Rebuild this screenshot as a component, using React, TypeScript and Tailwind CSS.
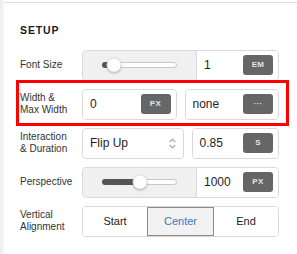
import React from "react";

const FONT = { fontFamily: '"Liberation Sans", Arial, sans-serif' };

function Badge({ label }: { label: string }) {
  return (
    <span className="flex h-[20px] w-[30px] shrink-0 items-center justify-center rounded-[3px] bg-[#666666] text-[8px] font-bold tracking-[0.3px] text-[#e4e4e4]">
      {label}
    </span>
  );
}

function Slider({ pos }: { pos: number }) {
  return (
    <div className="flex h-full w-[114px] shrink-0 items-center border-r border-[#d9d9d9] bg-[#f0f0f0] px-[19px]">
      <div className="relative h-[6px] w-full rounded-full border border-[#c8c8c8] bg-white">
        <div
          className="absolute -top-px -left-px h-[6px] rounded-full bg-[#555555]"
          style={{ width: pos + 1 }}
        />
        <div
          className="absolute top-1/2 h-[15px] w-[15px] -translate-x-1/2 -translate-y-1/2 rounded-full border border-[#e2e2e2] bg-white shadow-[0_1px_2px_rgba(0,0,0,0.25)]"
          style={{ left: pos }}
        />
      </div>
    </div>
  );
}

function Field({ value, unit }: { value: string; unit: string }) {
  return (
    <div className="flex h-full flex-1 items-center justify-between bg-white pl-[7px] pr-[5px] text-[12px] text-[#1e1e1e]">
      <span>{value}</span>
      <Badge label={unit} />
    </div>
  );
}

function Row({ label, children, className = "" }: { label: React.ReactNode; children: React.ReactNode; className?: string }) {
  return (
    <div className={`relative flex h-[31px] items-center ${className}`}>
      <div className="w-[62px] shrink-0 text-[10px] leading-[12px] text-[#333333]">{label}</div>
      <div className="flex h-full flex-1 gap-[8px]">{children}</div>
    </div>
  );
}

export default function App() {
  return (
    <div className="flex h-[254px] w-[297px] bg-[#f3f3f3]" style={FONT}>
      <div className="w-[4px] shrink-0 bg-gradient-to-r from-[#ededed] to-[#f7f7f7]" />
      <div className="flex-1 bg-white pt-[2px]">
        <div className="border-t border-[#dedede] pr-[18px] pl-[16px]">
          <h2 className="mt-[20px] text-[10.5px] font-bold tracking-[0.9px] text-[#1a1a1a]">SETUP</h2>

          <div className="mt-[11px] flex flex-col gap-[8px]">
            <Row label="Font Size">
              <div className="flex h-full flex-1 overflow-hidden rounded-[4px] border border-[#d9d9d9]">
                <Slider pos={11} />
                <Field value="1" unit="EM" />
              </div>
            </Row>

            <Row
              label={
                <>
                  Width &amp;
                  <br />
                  Max Width
                </>
              }
            >
              <div className="flex flex-1 overflow-hidden rounded-[4px] border border-[#d9d9d9]">
                <Field value="0" unit="PX" />
              </div>
              <div className="flex flex-1 overflow-hidden rounded-[4px] border border-[#d9d9d9]">
                <Field value="none" unit="···" />
              </div>
              <div className="pointer-events-none absolute -top-[9px] -right-[10px] -bottom-[6px] -left-[4px] border-[3px] border-[#ff0000]" />
            </Row>

            <Row
              label={
                <>
                  Interaction
                  <br />
                  &amp; Duration
                </>
              }
            >
              <div className="flex flex-1 items-center justify-between rounded-[4px] border border-[#d9d9d9] bg-white pr-[7px] pl-[7px] text-[12px] text-[#1e1e1e]">
                <span>Flip Up</span>
                <svg width="7" height="11" viewBox="0 0 7 11" fill="none" stroke="#a8a8a8" strokeWidth="1.2">
                  <path d="M0.8 4 L3.5 1.2 L6.2 4" />
                  <path d="M0.8 7 L3.5 9.8 L6.2 7" />
                </svg>
              </div>
              <div className="flex flex-1 overflow-hidden rounded-[4px] border border-[#d9d9d9]">
                <Field value="0.85" unit="S" />
              </div>
            </Row>

            <Row label="Perspective">
              <div className="flex h-full flex-1 overflow-hidden rounded-[4px] border border-[#d9d9d9]">
                <Slider pos={37} />
                <Field value="1000" unit="PX" />
              </div>
            </Row>

            <Row
              label={
                <>
                  Vertical
                  <br />
                  Alignment
                </>
              }
            >
              <div className="flex flex-1 overflow-hidden rounded-[4px] border border-[#d9d9d9] text-[11px] text-[#222222]">
                <button className="flex flex-1 items-center justify-center bg-white">Start</button>
                <button className="flex w-[67px] items-center justify-center border border-[#8a8a8a] bg-[#f2f2f2] text-[#2f7fc1]">
                  Center
                </button>
                <button className="flex flex-1 items-center justify-center bg-white">End</button>
              </div>
            </Row>
          </div>
        </div>
      </div>
    </div>
  );
}
